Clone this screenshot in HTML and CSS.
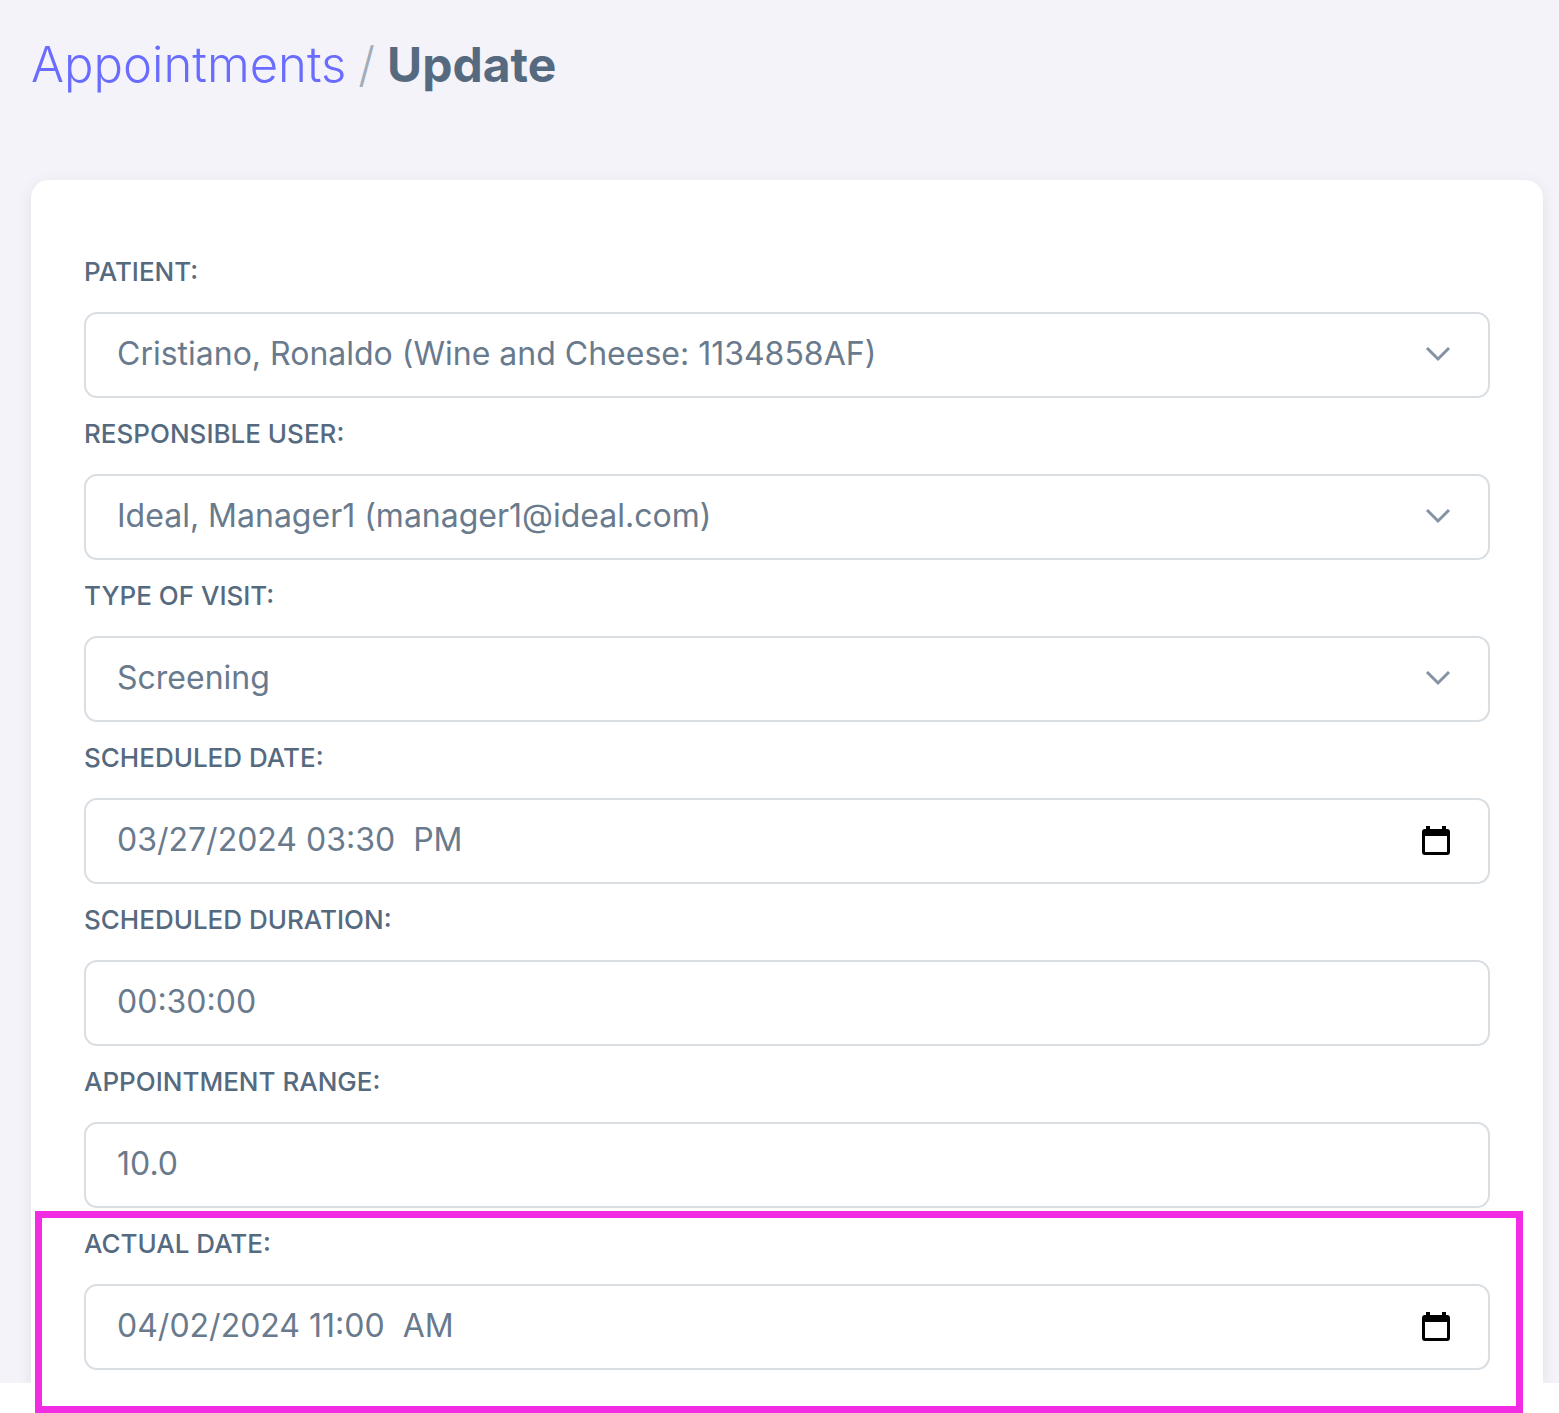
FILE: index.html
```html
<!DOCTYPE html>
<html lang="en">
<head>
  <meta charset="utf-8">
  <meta name="viewport" content="width=device-width, initial-scale=1">
  <title>Appointments / Update</title>
  <link rel="stylesheet" href="styles.css">
</head>
<body>
  <main class="page">
    <h1 class="breadcrumb">
      <a class="breadcrumb-link" href="#">Appointments</a>
      <span class="breadcrumb-separator">/</span>
      <span class="breadcrumb-current">Update</span>
    </h1>

    <form class="card">
      <div class="field">
        <label class="label" for="patient">PATIENT:</label>
        <div class="control">
          <select class="input" id="patient">
            <option>Cristiano, Ronaldo (Wine and Cheese: 1134858AF)</option>
          </select>
          <svg class="chevron" viewBox="0 0 26 16" aria-hidden="true"><path d="M2 2l11 11L24 2"/></svg>
        </div>
      </div>

      <div class="field">
        <label class="label" for="user">RESPONSIBLE USER:</label>
        <div class="control">
          <select class="input" id="user">
            <option>Ideal, Manager1 (manager1@ideal.com)</option>
          </select>
          <svg class="chevron" viewBox="0 0 26 16" aria-hidden="true"><path d="M2 2l11 11L24 2"/></svg>
        </div>
      </div>

      <div class="field">
        <label class="label" for="visit">TYPE OF VISIT:</label>
        <div class="control">
          <select class="input" id="visit">
            <option>Screening</option>
          </select>
          <svg class="chevron" viewBox="0 0 26 16" aria-hidden="true"><path d="M2 2l11 11L24 2"/></svg>
        </div>
      </div>

      <div class="field">
        <label class="label" for="scheduled-date">SCHEDULED DATE:</label>
        <div class="control">
          <input class="input" id="scheduled-date" type="text" value="03/27/2024 03:30&nbsp; PM">
          <button class="picker" type="button" aria-label="Choose scheduled date">
            <svg class="calendar" viewBox="0 0 28 31" aria-hidden="true"><path fill-rule="evenodd" d="M4 1h4v3h12V1h4v3h1a3 3 0 0 1 3 3v20a3 3 0 0 1-3 3H3a3 3 0 0 1-3-3V7a3 3 0 0 1 3-3h1zM3 11v16h22V11z"/></svg>
          </button>
        </div>
      </div>

      <div class="field">
        <label class="label" for="duration">SCHEDULED DURATION:</label>
        <div class="control">
          <input class="input" id="duration" type="text" value="00:30:00">
        </div>
      </div>

      <div class="field">
        <label class="label" for="range">APPOINTMENT RANGE:</label>
        <div class="control">
          <input class="input" id="range" type="text" value="10.0">
        </div>
      </div>

      <div class="field field-highlighted">
        <label class="label" for="actual-date">ACTUAL DATE:</label>
        <div class="control">
          <input class="input" id="actual-date" type="text" value="04/02/2024 11:00&nbsp; AM">
          <button class="picker" type="button" aria-label="Choose actual date">
            <svg class="calendar" viewBox="0 0 28 31" aria-hidden="true"><path fill-rule="evenodd" d="M4 1h4v3h12V1h4v3h1a3 3 0 0 1 3 3v20a3 3 0 0 1-3 3H3a3 3 0 0 1-3-3V7a3 3 0 0 1 3-3h1zM3 11v16h22V11z"/></svg>
          </button>
        </div>
      </div>
    </form>
  </main>
</body>
</html>
```
FILE: styles.css
```css
* {
  box-sizing: border-box;
}

body {
  margin: 0;
  padding-bottom: 30px;
  background: #fff;
  color: #697a8d;
  font-family: Inter, "Liberation Sans", sans-serif;
}

.page {
  padding: 33px 16px 0 31px;
  background: #f4f3f9;
}

.breadcrumb {
  display: flex;
  align-items: baseline;
  gap: 12px;
  margin: 0 0 83px;
  font-size: 48px;
  line-height: 64px;
  font-weight: 300;
}

.breadcrumb-link {
  color: #696cff;
  font-size: 49px;
  text-decoration: none;
}

.breadcrumb-separator {
  color: #a1acb8;
}

.breadcrumb-current {
  color: #566a7f;
  font-weight: 700;
}

.card {
  position: relative;
  isolation: isolate;
  display: flex;
  flex-direction: column;
  gap: 22px;
  padding: 78px 53px 13px;
  border-radius: 18px 18px 0 0;
  background: #fff;
}

/* The shadow shows at the top and sides only. */
.card::before {
  content: "";
  position: absolute;
  z-index: -1;
  inset: 0;
  border-radius: inherit;
  box-shadow: 0 4px 14px rgba(67, 89, 113, 0.12);
  clip-path: inset(-32px -16px 0 -32px);
}

.field {
  position: relative;
}

.label {
  display: block;
  margin-bottom: 26px;
  color: #566a7f;
  font-size: 26px;
  font-weight: 500;
  line-height: 28px;
}

.control {
  position: relative;
}

.input {
  display: block;
  width: 100%;
  height: 86px;
  padding: 0 80px 4px 31px;
  border: 2px solid #d9dee3;
  border-radius: 13px;
  background: #fff;
  color: #697a8d;
  font: inherit;
  font-size: 32px;
  appearance: none;
}

.chevron {
  position: absolute;
  top: 34px;
  right: 39px;
  width: 26px;
  height: 16px;
  fill: none;
  stroke: #8592a3;
  stroke-width: 3;
  pointer-events: none;
}

.picker {
  position: absolute;
  top: 27px;
  right: 40px;
  padding: 0;
  border: 0;
  background: none;
}

.calendar {
  display: block;
  width: 28px;
  height: 31px;
}

.field-highlighted::after {
  content: "";
  position: absolute;
  inset: -19px -33px -43px -49px;
  border: 7px solid #f22ce3;
  pointer-events: none;
}
```
